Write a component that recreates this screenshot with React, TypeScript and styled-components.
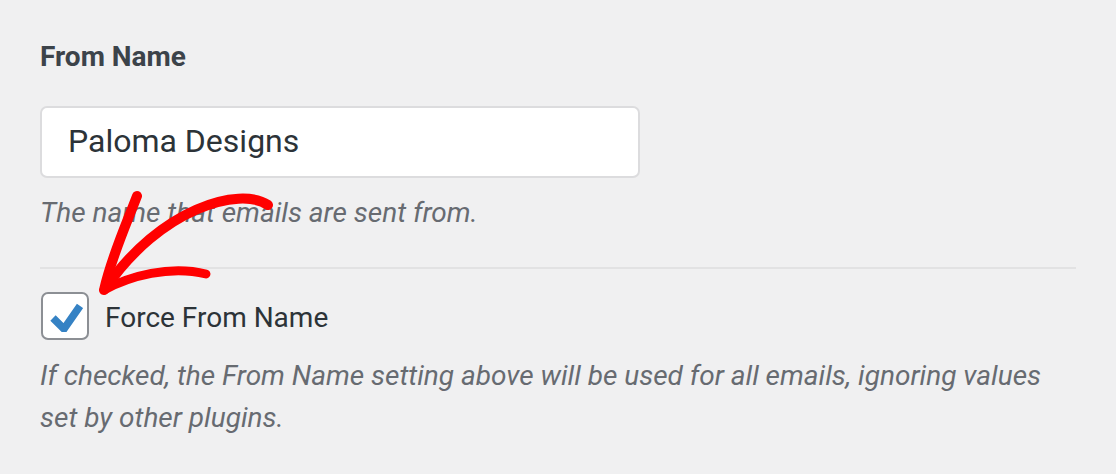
import React from 'react';
import styled, { createGlobalStyle } from 'styled-components';

const GlobalStyle = createGlobalStyle`
  html, body {
    margin: 0;
    padding: 0;
    background: #f0f0f1;
  }
  body {
    font-family: Roboto, "Liberation Sans", Arial, sans-serif;
  }
`;

const Page = styled.div`
  position: relative;
  width: 1116px;
  height: 474px;
  box-sizing: border-box;
  padding: 37px 40px 0 40px;
  overflow: hidden;
`;

const FieldLabel = styled.div`
  font-size: 28px;
  line-height: 40px;
  font-weight: 700;
  color: #3c434a;
`;

const TextInput = styled.input`
  display: block;
  margin-top: 29px;
  width: 600px;
  height: 72px;
  box-sizing: border-box;
  padding: 0 26px 2px 26px;
  border: 2px solid #dcdcde;
  border-radius: 7px;
  background: #fff;
  font-family: Roboto, "Liberation Sans", Arial, sans-serif;
  font-size: 32px;
  color: #2c3338;
  outline: none;
`;

const Description = styled.p<{ $gap: number }>`
  margin: ${(p) => p.$gap}px 0 0 0;
  font-size: 28px;
  line-height: 42px;
  font-style: italic;
  color: #676b71;
  max-width: 1036px;
`;

const Divider = styled.hr`
  margin: 33px 0 0 0;
  width: 1036px;
  height: 2px;
  border: 0;
  background: #e2e2e3;
`;

const CheckRow = styled.label`
  display: flex;
  align-items: center;
  gap: 16px;
  margin-top: 23px;
  margin-left: 1px;
`;

const CheckBox = styled.span`
  display: flex;
  align-items: center;
  justify-content: center;
  width: 48px;
  height: 48px;
  box-sizing: border-box;
  border: 2px solid #8c8f94;
  border-radius: 7px;
  background: #fff;
`;

const CheckText = styled.span`
  font-size: 28px;
  line-height: 36px;
  padding-top: 3px;
  color: #2c3338;
`;

const Annotation = styled.svg`
  position: absolute;
  left: 0;
  top: 0;
  width: 1116px;
  height: 474px;
  pointer-events: none;
`;

export default function App() {
  return (
    <>
      <GlobalStyle />
      <Page>
        <FieldLabel>From Name</FieldLabel>
        <TextInput type="text" defaultValue="Paloma Designs" readOnly />
        <Description $gap={14}>The name that emails are sent from.</Description>
        <Divider />
        <CheckRow>
          <CheckBox>
            <svg width="36" height="32" viewBox="0 0 36 32">
              <polyline
                points="6,18 17,29 33,6"
                fill="none"
                stroke="#3582c4"
                strokeWidth="7.5"
                strokeLinejoin="miter"
              />
            </svg>
          </CheckBox>
          <CheckText>Force From Name</CheckText>
        </CheckRow>
        <Description $gap={15}>
          If checked, the From Name setting above will be used for all emails, ignoring values
          set by other plugins.
        </Description>
        <Annotation viewBox="0 0 1116 474">
          <g fill="none" stroke="#ff0000" strokeLinecap="round" strokeLinejoin="round">
            <path d="M 268 205 C 240 186, 160 208, 105 289" strokeWidth="10" />
            <path d="M 137 196 C 126 225, 112 255, 104 290" strokeWidth="10" />
            <path d="M 104 290 C 130 276, 170 265, 206 274" strokeWidth="9" />
          </g>
        </Annotation>
      </Page>
    </>
  );
}
